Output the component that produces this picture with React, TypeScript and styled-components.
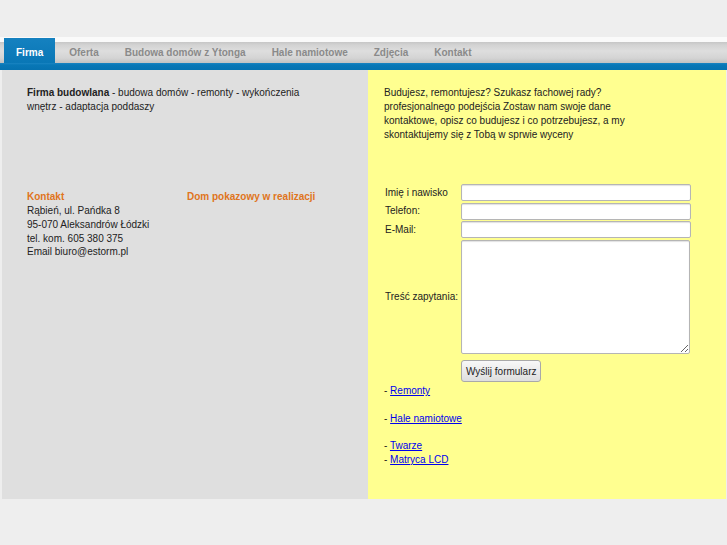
import React from "react";
import styled, { createGlobalStyle } from "styled-components";

const GlobalStyle = createGlobalStyle`
  html, body { margin: 0; padding: 0; }
  body {
    background: #eeeeee;
    font-family: "Liberation Sans", Arial, sans-serif;
    font-size: 10px;
    color: #222;
  }
`;

const Page = styled.div`
  padding-top: 37px;
`;

const NavBar = styled.nav`
  display: flex;
  align-items: flex-end;
  gap: 2px;
  height: 26px;
  padding-left: 4px;
  background: linear-gradient(
    to bottom,
    #fafafa 0,
    #fafafa 5px,
    #c6c6c6 5px,
    #d3d3d3 8px,
    #dedede 14px,
    #d4d4d4 21px,
    #c2c2c2 26px
  );
`;

const NavItem = styled.a<{ $active?: boolean }>`
  display: block;
  height: 25px;
  box-sizing: border-box;
  padding: 4px 12px 0;
  line-height: 21px;
  font-weight: bold;
  font-size: 10px;
  text-decoration: none;
  color: ${(p) => (p.$active ? "#ffffff" : "#8a8a8a")};
  background: ${(p) =>
    p.$active ? "linear-gradient(to bottom, #1581c0, #0977b6)" : "transparent"};
`;

const BlueBar = styled.div`
  height: 7px;
  background: linear-gradient(to bottom, #1a84c2 0, #0877b6 2px, #0672b0 7px);
`;

const Content = styled.div`
  display: flex;
  width: 724px;
  height: 429px;
  margin-left: 2px;
`;

const LeftPanel = styled.section`
  width: 366px;
  box-sizing: border-box;
  background: #dfdfdf;
  padding: 16px 25px;
`;

const RightPanel = styled.section`
  width: 358px;
  box-sizing: border-box;
  background: #ffff90;
  padding: 16px 16px;
`;

const Para = styled.p`
  margin: 0;
  line-height: 14px;
`;

const Columns = styled.div`
  display: grid;
  grid-template-columns: 160px 1fr;
  margin-top: 76px;
`;

const Heading = styled.div`
  color: #e07420;
  font-weight: bold;
  line-height: 14px;
`;

const Line = styled.div`
  line-height: 13.75px;
`;

const FormGrid = styled.form`
  display: grid;
  grid-template-columns: 77px 230px;
  row-gap: 1.5px;
  align-items: center;
  margin-top: 42px;
`;

const Label = styled.label`
  padding-left: 1px;
  line-height: 14px;
`;

const Input = styled.input`
  box-sizing: border-box;
  width: 230px;
  height: 17px;
  margin: 0;
  border: 1px solid #b5b5b5;
  border-radius: 2px;
  background: #fff;
  box-shadow: inset 0 1px 1px rgba(0, 0, 0, 0.12);
  font: inherit;
`;

const TextArea = styled.textarea`
  box-sizing: border-box;
  width: 229px;
  height: 114px;
  margin: 0;
  border: 1px solid #b5b5b5;
  border-radius: 2px;
  background: #fff;
  box-shadow: inset 0 1px 1px rgba(0, 0, 0, 0.12);
  font: inherit;
`;

const SubmitCell = styled.div`
  grid-column: 2;
  padding-top: 5px;
`;

const Button = styled.button`
  box-sizing: border-box;
  height: 22px;
  padding: 0 4px;
  border: 1px solid #a9a9a9;
  border-radius: 3px;
  background: linear-gradient(to bottom, #f8f8f8, #dedede);
  color: #222;
  font-family: "Liberation Sans", Arial, sans-serif;
  font-size: 10px;
`;

const Links = styled.div`
  margin-top: 2px;
  line-height: 13.75px;
`;

const LinkLine = styled.div``;

const Blank = styled.div`
  height: 13.75px;
`;

const Link = styled.a`
  color: #0000ee;
  text-decoration: underline;
`;

const navItems = ["Firma", "Oferta", "Budowa domów z Ytonga", "Hale namiotowe", "Zdjęcia", "Kontakt"];

export default function App() {
  return (
    <>
      <GlobalStyle />
      <Page>
        <NavBar>
          {navItems.map((n, i) => (
            <NavItem key={n} $active={i === 0} href="#">
              {n}
            </NavItem>
          ))}
        </NavBar>
        <BlueBar />
        <Content>
          <LeftPanel>
            <Para>
              <b>Firma budowlana</b> - budowa domów - remonty - wykończenia
              <br />
              wnętrz - adaptacja poddaszy
            </Para>
            <Columns>
              <div>
                <Heading>Kontakt</Heading>
                <Line>Rąbień, ul. Pańdka 8</Line>
                <Line>95-070 Aleksandrów Łódzki</Line>
                <Line>tel. kom. 605 380 375</Line>
                <Line>Email biuro@estorm.pl</Line>
              </div>
              <div>
                <Heading>Dom pokazowy w realizacji</Heading>
              </div>
            </Columns>
          </LeftPanel>
          <RightPanel>
            <Para>
              Budujesz, remontujesz? Szukasz fachowej rady?
              <br />
              profesjonalnego podejścia Zostaw nam swoje dane
              <br />
              kontaktowe, opisz co budujesz i co potrzebujesz, a my
              <br />
              skontaktujemy się z Tobą w sprwie wyceny
            </Para>
            <FormGrid onSubmit={(e) => e.preventDefault()}>
              <Label>Imię i nawisko</Label>
              <Input type="text" />
              <Label>Telefon:</Label>
              <Input type="text" />
              <Label>E-Mail:</Label>
              <Input type="text" />
              <Label>Treść zapytania:</Label>
              <TextArea />
              <SubmitCell>
                <Button type="submit">Wyślij formularz</Button>
              </SubmitCell>
            </FormGrid>
            <Links>
              <LinkLine>
                - <Link href="#">Remonty</Link>
              </LinkLine>
              <Blank />
              <LinkLine>
                - <Link href="#">Hale namiotowe</Link>
              </LinkLine>
              <Blank />
              <LinkLine>
                - <Link href="#">Twarze</Link>
              </LinkLine>
              <LinkLine>
                - <Link href="#">Matryca LCD</Link>
              </LinkLine>
            </Links>
          </RightPanel>
        </Content>
      </Page>
    </>
  );
}
